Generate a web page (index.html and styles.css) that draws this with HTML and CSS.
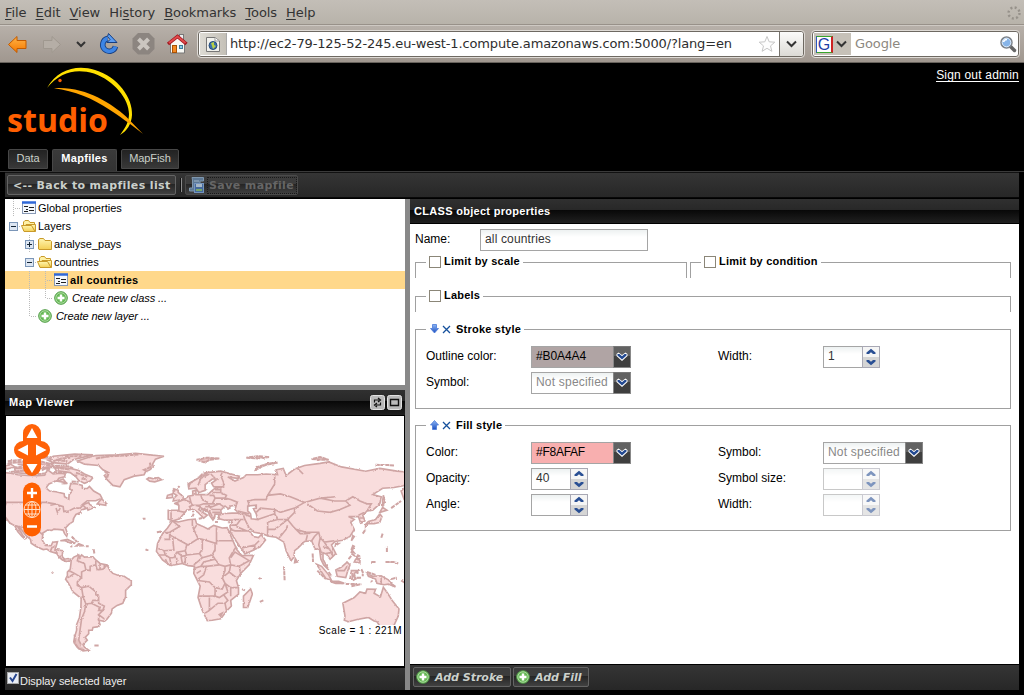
FILE: index.html
```
<!DOCTYPE html>
<html lang="en">
<head>
<meta charset="utf-8">
<title>Studio</title>
<link rel="stylesheet" href="styles.css">
</head>
<body>
<svg class="defs" width="0" height="0" aria-hidden="true">
  <defs>
    <linearGradient id="gBlue" x2="0" y2="1"><stop offset="0" stop-color="#8db6f5"/><stop offset="1" stop-color="#1c4fc0"/></linearGradient>
    <linearGradient id="gFold" x2="0" y2="1"><stop offset="0" stop-color="#fff6b0"/><stop offset="1" stop-color="#f3cf55"/></linearGradient>
    <linearGradient id="gOrange" x2="0" y2="1"><stop offset="0" stop-color="#ffb347"/><stop offset="1" stop-color="#f57900"/></linearGradient>
    <radialGradient id="gAdd"><stop offset="0" stop-color="#7ac968"/><stop offset=".7" stop-color="#62b552"/><stop offset="1" stop-color="#8ccf7c"/></radialGradient>
  </defs>
  <symbol id="vert" viewBox="0 0 16 18"><path d="M8.5 0V18" class="dots"/></symbol>
  <symbol id="tee" viewBox="0 0 16 18"><path d="M8.5 0V18M10 9.500H16" class="dots"/></symbol>
  <symbol id="elbow" viewBox="0 0 16 18"><path d="M8.500 0V10M10 9.500H16" class="dots"/></symbol>
  <symbol id="minus" viewBox="0 0 16 18"><path d="M14 9.500H16" class="dots"/><rect x="4.500" y="5.500" width="8" height="8" fill="#dde6f2" stroke="#7b96b8"/><path d="M6 9.500H11" stroke="#123"/></symbol>
  <symbol id="plus" viewBox="0 0 16 18"><path d="M8.500 0V5M8.500 14V18M14 9.500H16" class="dots"/><rect x="4.500" y="5.500" width="8" height="8" fill="#dde6f2" stroke="#7b96b8"/><path d="M6 9.500H11M8.500 7V12" stroke="#123"/></symbol>
  <symbol id="form" viewBox="0 0 16 18"><rect x="1.500" y="3.500" width="13" height="11" fill="#f4f8fd" stroke="#8899b5"/><path d="M1 3.500H15" stroke="#2f68d8" stroke-width="2.500"/><path d="M3 7.500H7M8 8.500H13M5 10.500H7M8 11.500H13M3 12.500H7" stroke="#222" fill="none"/></symbol>
  <symbol id="folder" viewBox="0 0 16 18"><path d="M1.500 14V4.500L3 3.500H6.500L8 5.500H13.500L14.500 6.500V14.500H2Z" fill="url(#gFold)" stroke="#c99a2a"/></symbol>
  <symbol id="open" viewBox="0 0 16 18"><path d="M2.500 14V5L4 3.500H7.500L9 5.500H13.500V8" fill="#fff2a6" stroke="#c99a2a"/><path d="M5 7.500H14.500V14.500H5Z" fill="url(#gFold)" stroke="#c99a2a"/><path d="M.500 8.500H10.500L14 14.500H3Z" fill="url(#gFold)" stroke="#c99a2a"/></symbol>
  <symbol id="add" viewBox="0 0 16 18"><circle cx="8" cy="9" r="6.300" fill="url(#gAdd)" stroke="#4d9a43"/><circle cx="8" cy="9" r="5.200" fill="none" stroke="#b5e0aa" stroke-width=".8"/><path d="M8 5.500V12.500M4.500 9H11.500" stroke="#fff" stroke-width="2.400"/></symbol>
  <symbol id="chev" viewBox="0 0 15 20"><path d="M2 7L4 5.500L7.500 8L11 5.500L13 7V9L7.500 14L2 9Z" fill="#fff"/><path d="M3 7H5L7.500 9.300L10 7H12V8.500L7.500 12.500L3 8.500Z" fill="#234a92"/></symbol>
  <symbol id="spin" viewBox="0 0 15 20"><path d="M3 7V5.500L7.500 1.800L12 5.500V7H9.500L7.500 5.200L5.500 7Z" fill="#294f94"/><path d="M3 13V14.500L7.500 18.200L12 14.500V13H9.500L7.500 14.800L5.500 13Z" fill="#294f94"/></symbol>
  <symbol id="cross" viewBox="0 0 9 9"><path d="M1 1L8 8M8 1L1 8" stroke="#15509c" stroke-width="1.300"/></symbol>
</svg>

<header class="chrome">
  <nav class="menubar">
    <span><u>F</u>ile</span><span><u>E</u>dit</span><span><u>V</u>iew</span><span>Hi<u>s</u>tory</span><span><u>B</u>ookmarks</span><span><u>T</u>ools</span><span><u>H</u>elp</span>
    <svg class="throbber" width="14" height="14"><circle cx="7" cy="7" r="5.500" fill="none" stroke="#96918a" stroke-width="2.400" stroke-dasharray="2 2.320"/></svg>
  </nav>
  <div class="navbar">
    <svg class="navicons" width="190" height="36">
      <path d="M8.500 18.500L17 10.500V14.500H26V22.500H17V26.500Z" fill="url(#gOrange)" stroke="#c25a00"/>
      <path d="M60.500 18.500L52 10.500V14.500H43.500V22.500H52V26.500Z" fill="#b5aea6" stroke="#9f988f"/>
      <path d="M77 16L81 20L85 16" fill="none" stroke="#333" stroke-width="2"/>
      <path d="M115.500 20.500A6.500 6.500 0 1 1 107.500 12.500" fill="none" stroke="#153e82" stroke-width="5.500"/><path d="M115.500 20.500A6.500 6.500 0 1 1 107.500 12.500" fill="none" stroke="#3d85e5" stroke-width="3.700"/><path d="M108.500 7.500L117 16.500H107L110 13.500L107.500 10.500Z" fill="#5a9bf0" stroke="#153e82"/>
      <path d="M138 7H149L154.500 12.500V23L149 28.500H138L132.500 23V12.500Z" fill="#8c8580"/><path d="M138.500 13L148.500 23M148.500 13L138.500 23" stroke="#cbc6c0" stroke-width="4"/>
      <rect x="179.500" y="8.500" width="4" height="6" fill="#eee" stroke="#777"/><path d="M170.500 17V27H184.500V17L177.500 11Z" fill="#f8f8f4" stroke="#777"/><path d="M168 18L177.500 10.500L186.500 18" fill="none" stroke="#a31720" stroke-width="3.500"/><path d="M169 17L177.500 10.500L185.500 17" fill="none" stroke="#e04a4a" stroke-width="2"/><rect x="172.500" y="19.500" width="4" height="7" fill="#f58a22" stroke="#a85206"/><rect x="179.500" y="19.500" width="3" height="3" fill="#8fd0e8" stroke="#3d7d9c"/>
    </svg>
    <div class="urlbox">
      <span class="favicon"><svg width="16" height="18"><path d="M1.500 2.500H10L14.500 6V16.500H1.500Z" fill="#f1f1ec" stroke="#777"/><path d="M10 2.500V6H14" fill="#fff" stroke="#999"/><circle cx="8" cy="10.500" r="4" fill="#3b70ad" stroke="#254a78"/><path d="M6 8L9 7L9 10L11 11L8 14L7 11Z" fill="#b7cf45"/></svg></span>
      <span class="url">http://ec2-79-125-52-245.eu-west-1.compute.amazonaws.com:5000/?lang=en</span>
      <svg class="star" width="18" height="18"><path d="M9 1.500L11.200 6.800L16.800 7.200L12.500 10.900L13.900 16.300L9 13.300L4.100 16.300L5.500 10.900L1.200 7.200L6.800 6.800Z" fill="#fdfdfd" stroke="#c6c6c6"/></svg>
      <span class="urldrop"><svg width="11" height="8"><path d="M1 1.500L5.500 6L10 1.500" fill="none" stroke="#333" stroke-width="2"/></svg></span>
    </div>
    <div class="search">
      <span class="engine"><b class="g">G</b><svg width="11" height="8"><path d="M1 1.500L5.500 6L10 1.500" fill="none" stroke="#333" stroke-width="2"/></svg></span>
      <span class="hint">Google</span>
      <svg class="lens" width="18" height="18"><path d="M11 11L15.500 15.500" stroke="#666" stroke-width="3.500" stroke-linecap="round"/><circle cx="7.500" cy="7.500" r="5.500" fill="#86b4e8" stroke="#7d8288" stroke-width="1.500"/><circle cx="7.500" cy="7.500" r="4.300" fill="none" stroke="#dbe9f8"/><path d="M4.500 7Q5 4.500 8 4.500" stroke="#fff" stroke-width="1.500" fill="none"/></svg>
    </div>
  </div>
</header>

<div class="banner">
  <svg class="logo" width="150" height="80">
    <text x="7" y="68.500" class="logotext" textLength="101" lengthAdjust="spacingAndGlyphs">studio</text>
    <path d="M47 25C58 6 77 1.500 95 7C118 14 133 35 132 52C131.500 61 127 68 120 72C126 64 129 58 129 51C129 36 114 17.500 94 10.500C76 5 60 9 47 25Z" fill="#ffe000"/>
    <path d="M54 25.200C85 23 111 40 126 53.500L143 71C133 63 125 57 110 47C92 35 75 28 54 25.200Z" fill="#ffa500"/>
    <circle cx="60" cy="17.500" r="1.700" fill="#ff5f00"/>
  </svg>
  <a class="signout">Sign out admin</a>
</div>

<nav class="tabs"><span class="tab">Data</span><span class="tab active">Mapfiles</span><span class="tab fish">MapFish</span></nav>

<div class="toolbar">
  <span class="btn back">&lt;-- Back to mapfiles list</span>
  <i class="sep"></i>
  <span class="btn save"><svg width="17" height="18"><path d="M4 1.500H15.500V5H12V15H1.500V12H4.500V4Z" fill="#5d7894" stroke="#7f97ae"/><path d="M6 5H11M6 8H10" stroke="#9fb4c8"/><rect x="6.500" y="7.500" width="9" height="9" fill="#44699c" stroke="#7494bd"/><rect x="8" y="8" width="6" height="3" fill="#a8b7c6"/><rect x="8" y="13" width="6" height="2" fill="#7aa868"/></svg><em>Save mapfile</em></span>
</div>

<main class="work">
  <section class="left">
    <div class="tree">
      <div class="row"><svg><use href="#tee"/></svg><svg><use href="#form"/></svg><span>Global properties</span></div>
      <div class="row"><svg><use href="#minus"/></svg><svg><use href="#open"/></svg><span>Layers</span></div>
      <div class="row"><i></i><svg><use href="#plus"/></svg><svg><use href="#folder"/></svg><span>analyse_pays</span></div>
      <div class="row"><i></i><svg><use href="#minus"/></svg><svg><use href="#open"/></svg><span>countries</span></div>
      <div class="row selected"><i></i><svg><use href="#vert"/></svg><svg><use href="#tee"/></svg><svg><use href="#form"/></svg><span>all countries</span></div>
      <div class="row create"><i></i><svg><use href="#vert"/></svg><svg><use href="#elbow"/></svg><svg><use href="#add"/></svg><span>Create new class ...</span></div>
      <div class="row create"><i></i><svg><use href="#elbow"/></svg><svg><use href="#add"/></svg><span>Create new layer ...</span></div>
    </div>
    <div class="maphead"><span>Map Viewer</span>
      <svg width="15" height="15"><rect x=".500" y=".500" width="14" height="14" rx="2" fill="#b9b9b9" stroke="#e2e2e2"/><path d="M4.500 7.500V5H9M8 3L10.500 5L8 7M10.500 7.500V10H6M7 8L4.500 10L7 12" fill="none" stroke="#111" stroke-width="1.200"/></svg>
      <svg width="15" height="15"><rect x=".500" y=".500" width="14" height="14" rx="2" fill="#b9b9b9" stroke="#e2e2e2"/><path d="M3.500 4.500H11.500V10.500H3.500Z" fill="#bbb" stroke="#111" stroke-width="1.400"/></svg>
    </div>
    <div class="map">
      <svg class="world" width="398" height="250" viewBox="0 0 398 250">
        <defs><filter id="rough" x="0" y="0" width="1" height="1"><feTurbulence type="fractalNoise" baseFrequency=".35" numOctaves="2" seed="4"/><feDisplacementMap in="SourceGraphic" scale="2.200" xChannelSelector="R" yChannelSelector="G"/></filter></defs>
        <g filter="url(#rough)"><rect width="398" height="250" fill="#fff"/>
        <g transform="translate(175 156) scale(1.420 -1.420)">
          <!-- Coastlines in longitude / latitude -->
          <g class="land">
            <path d="M-135 69L-128 70L-124 70L-120 69.500L-115 68.500L-108 68L-101 67.800L-96 68.200L-94 72L-90 69L-85 69.500L-81.500 69L-82 67L-86 66L-87 64.500L-93 62L-94.500 60L-94.700 58.800L-92.500 57L-88 56.500L-82.300 55.200L-82 53L-79 51.300L-78.800 54.500L-76.600 57L-78.500 59L-77.500 62.400L-73 62L-69.600 61L-69.400 59L-66 58.800L-64.500 60.300L-61.500 57L-57 54.500L-55.700 52L-60 50.200L-66 50.200L-70 47L-65 49L-64.300 47.500L-61 45.500L-65.500 43.500L-66 45L-70 43.700L-70.500 42L-74 40.500L-75.500 38L-76 35.500L-79 33.500L-81.300 31L-80 27L-80.500 25.200L-82 27L-83 29.500L-85 29.800L-89.500 30.200L-91 29.300L-94 29.600L-97.300 27.500L-97.700 22.500L-95.500 18.700L-91.500 18.500L-90.300 21L-87 21.400L-88 18L-88.700 15.800L-83.300 15L-83.700 11L-82 9L-79.500 9.500L-77.300 8.500L-79.500 7.500L-81 7.500L-83.500 8.500L-85.800 10.500L-87.500 13L-92 14.500L-94.500 16.200L-97 15.800L-102 18L-105.500 20.300L-106 23L-109.500 26L-112.800 30.500L-114.800 31.700L-113 28.500L-109.600 23L-112 25L-115 28.500L-117 32.500L-120.500 34.500L-124 39L-124 46L-123 49L-130 55Z"/>
            <path d="M-77.300 8.500L-75.500 10.500L-72 12L-71.500 10L-70 12L-68 10.500L-62 10.700L-60 8.500L-57 6L-52 5L-50 1L-48 -1L-44 -2.500L-40 -3L-37 -5L-35 -6L-35 -9L-39 -13L-39 -17.500L-41 -22L-45 -23.500L-48.500 -26L-49 -29L-52 -33L-54 -34.800L-58 -34L-57 -37L-58 -38.500L-62 -39L-62.500 -41L-65 -41L-65 -43.500L-67.500 -46L-66 -48L-69 -51L-68 -53L-65 -55L-69 -55.500L-73 -53L-75.500 -49L-75 -46L-73.500 -41L-73.500 -37L-71.500 -32L-70.500 -25L-70.300 -18.500L-76 -14L-79.500 -7.500L-81.300 -5L-80 -2.500L-80 0L-78 2L-77.500 6Z"/>
            <path d="M-73 78.200L-66 80.500L-60 82L-45 82.500L-32 83.600L-22 82.500L-12 81.500L-18 79.500L-20 76L-19.500 74L-22 72L-25 70.500L-26 68.500L-33 67.500L-40 65L-43 60L-48 61L-52 65L-54 68L-51 70L-55 72L-58 75L-68 76Z"/>
            <path d="M-24 65.500L-22 64L-18.500 63.500L-13.700 65L-16 66.400L-20 65.800L-22.500 66.400Z"/>
            <path d="M-80 73.500L-72 71.500L-68 69L-62 66.500L-64 64L-68 62.500L-72 64.500L-74 67L-78 70L-88 71.500L-89 73.500Z"/>
            <path d="M-90 77L-80 76L-76 79L-62 82.500L-75 83L-90 81.500L-94 79Z"/>
            <path d="M-117 70L-105 69L-102 70L-106 73L-117 73Z"/><path d="M-125 72L-117 74L-120 76L-125 74Z"/><path d="M-100 73L-92 74L-90 76.500L-100 76L-108 76L-115 76L-105 74Z"/><path d="M-87 64L-81 63L-83 65.500Z"/>
            <path d="M-59 48L-53 47L-53 49L-56 51.500Z"/><path d="M-85 22L-80 23L-74.500 20.200L-78 20.500L-82 22.200Z"/><path d="M-74 18.300L-68.500 18.500L-72 20Z"/>
            <path d="M-6 36L-2 35.200L5 36.800L10 37.300L11 34L15 32.300L19 30.300L23 32.800L29 31L32.500 31.200L34 28L37 21L39.500 15.500L43 11.500L51 11.800L48 5L42 -1L39 -6L40.500 -11L40.500 -15.500L35 -20L35.500 -24L32.500 -27L28 -33L22 -34L18.500 -34.300L15 -27L12 -18L13.500 -10L9 -1L9.500 4L5 4.500L1 6L-7.500 4.400L-13 8.500L-17.300 14.500L-16.500 20L-13 27L-9.500 31Z"/>
            <path d="M44 -25L47 -25L50.300 -15.500L49 -12L44 -17Z"/>
            <path d="M34 28L35 29.500L34.500 32L36 36.500L31 36.500L27 37.500L26.500 40L31 41.200L36 41.500L41 41.500L38 44L39 47L35 46.500L33.500 44.500L31 46.500L28 43.500L28.500 41L24 40.800L23.500 38L22.500 36.500L20 40L19.500 42L13.500 45.500L12.500 44L16 41.500L18.500 40L16 38L12 42L8.500 44.300L4 43.500L-1 37.500L-5.500 36L-9 37.200L-9 43.500L-1.500 43.500L-1.500 47L-4.500 48.300L2 51L5 53.300L8.500 54L8.200 57L10.500 57.500L10.500 54.500L19 54.500L21.500 57L24 59L30 60L23 60L21.500 62.500L25.500 65.500L22 65.500L17 61.500L17 57.500L12.500 56L10.500 59L5.500 58.500L5 62L12 66L19 70L28 71L41 67.500L40 66L33 66.800L38 64L44 66.500L46 68.500L54 68.500L60 69L68 68.500L67 72L72 73L74 68L80 72.500L87 75L98 76.500L104 77.500L113 74L130 71L140 73L152 71L165 69.800L165 60L158 60L163 58L157 51.500L155 57L160 61.500L150 59.500L142 59L135 54.500L141 53L140 48L135 43.500L131 43L128 40L129.500 36L126.500 34.500L125 39L121.500 39L118 39L122 37L119.500 35L122 30L119 25L114 22.300L108.500 21.500L106 19L109 13L105 9L102.500 12.500L100 13.500L100 9L104 1.500L100.500 5L98.500 9L97.500 16.500L94.500 16L92 22L87 21.500L82.500 17L80 15L79.500 10.500L77.500 8L74 15L72.500 21L67 24.500L62 25.200L57 27L51.500 28L49 30.500L48 29L51 25L54.500 24.200L56.500 26.200L59.500 22.500L55.500 17.500L45 12.700L42.500 16.500L39 21.500L35 28Z"/>
            <path d="M47 46.500L53 47L53 45L51 44.500L53 41L54 37L49.500 37.500L49 41L47 43Z" class="water"/>
            <path d="M-5.500 50L1.500 51L1.500 53L-2 56L-2 57.500L-5 58.500L-5.500 55.500L-3 54L-5 52Z"/><path d="M-10 52L-6 52.500L-6 55L-9.500 54Z"/>
            <path d="M130 32L131.500 34L136 34L140 35L141.500 39L140 41L137 37L132 35.500L130 33.500ZM140 42L145 43.500L142 45.500ZM142 46L143.500 50L142.500 54L142 50Z"/>
            <path d="M80 6.500L82 7L80.500 9.500Z"/><path d="M120 22L122 25L121 25.500Z"/><path d="M108.700 18.500L111 20L109 20Z"/>
            <path d="M95.500 5.500L99 4L104 -2L106 -6L102 -4.500L98 1.500Z"/><path d="M105 -6.500L111 -6.500L115 -8L109 -8Z"/><path d="M109 1.500L113 3.500L117 7L119 5L117.500 1L116 -4L110 -3Z"/><path d="M119 -5L120.500 -5L121 -2L123 -5L122 -1L125 1L120 1Z"/><path d="M120 14L122 18L121 18.500L120 16L122 13.500ZM122 7L126 6.500L126 9.500L123 9Z"/><path d="M131 -1L135 -3L141 -2.700L146 -5.500L148 -8L151 -10.500L146 -8.500L143 -9L138 -8L137 -5L132 -3Z"/>
            <path d="M114 -22L122 -18L126 -14L130 -15L131 -12L137 -12.200L136 -15L140.500 -17.500L142.500 -10.800L145.500 -15L149 -20.500L153.500 -26L153 -31L150 -37.500L146 -39L140 -38L138 -35L136 -34.500L132 -32L124 -33.500L118 -35L115 -34L115.500 -31Z"/>
          </g>
          <g class="isles">
            <path d="M11 79L17 77L20 79L27 80L18 80.500L14 79.500ZM52 71L54 73L60 75.500L68 77L61 76.300L54 74ZM46 80.500L54 80L62 81L54 81.500ZM92 79.500L100 79L104 79L98 81ZM137 75.500L146 75.300L150 75M179 71L178 72"/>
            <path d="M-122 76.500L-110 78L-105 77L-99 78L-92 76M-110 80L-94 81L-91 79M-122 78L-112 79M-95 75L-80 74.700L-76 73M-98 71.500L-96 73L-92 72.500M-76 68L-73 68M-80 62.500L-84 62.200M-108 70L-99 69L-95 69.500M-120 70.500L-110 71.500L-103 71M-118 73.500L-108 74.500M-90 70.500L-84 70L-80 70M-90 78L-84 80L-78 80.500M-88 79L-80 78M-82 81.500L-70 81.500M-92 74L-84 73L-78 72M-74 70L-70 68.500L-66 67M-70 66L-66 65M-77 63.800L-72 63.500M-60 80L-50 81.500L-40 82L-30 82.800M-22 77L-21 74L-26 72L-24 71M-52 66.500L-51 69.500L-54 71"/>
            <path d="M-77 25L-75 23L-73 21M-67 18.200H-65M-61.500 16L-61 13M-78 18.200L-76.500 18M-91 -1L-90 0M-25 37.500H-27M-17 28L-14 28.500M-25 16L-23 15M-61 -51.800L-58 -51.800M-75 -44L-74.500 -47L-75 -50L-73.500 -52L-72 -54L-68 -55"/>
            <path d="M8 39L9 41M8.500 42V43M12.500 37.500L15 38M24 35.200H26M33 35H34.500M27 37L26 39M22 38L24 38.500M14 44.500L18 42.500M18 57.500L18.500 58M5.500 60L6 62L8 63.500M13 67L15 69L20 70.500M-4 57L-6 57.500M-2 59.500L-1 60.500M72.500 4L73 -6M92.700 13L93 7M43 -12L45 -13M55 -5L56 -4M55.500 -21L58 -20"/>
            <path d="M96 1L99 -2L102 -5M106 -7L114 -8M116 -8.500L124 -8.500M120 -10L127 -8.500M127 2L128 0L128 -3M134 -6L134.500 -7M148 -5L152 -4M155 -6L160 -9M118 9L120 11.500M124 12L126 11M124 10L125 12M123 0L125 -1M120 13L123 11L125 8M104 0L106 -3M145 14V18M142 27L141 24M148 45L155 50M128 27L130 30M134 7H137M144 7L150 7L153 6M121 -6L124 -4L127 -4M131 0L137 -2M126 34.500L128 35M148 -9L151 -10"/>
          </g>
          <!-- National borders -->
          <path class="borders" d="M-123 49L-95 49L-89 48L-83 46L-82.500 42.500L-79 43L-75 45L-71 45L-69 47L-67 45M-92 47L-88 48L-85 46M-88 45L-87 42L-85 45M-82 43L-79 42M-117 32.500L-111 31.300L-106 31.500L-103 29L-100 28.500L-97 26M-92 14.500L-91 17L-89 18M-89 15.500L-87 13M-85.500 11L-83.500 11M-82.700 9.500V8.500
          M-72 12L-73 8L-68 6L-67 1.500L-70 0L-70 -4L-75 -1L-79 1M-75 -1L-78 -3L-80 -4M-70 -4L-73 -7L-73 -9.500L-70 -11L-69 -17L-70 -18M-67 1.500L-64 1L-64 4L-60 5L-60 8M-60 5L-59 1.500L-55 2L-52 5M-57 6L-57 2M-54 5L-54 2M-70 -11L-65 -10L-60 -14L-60 -16L-58 -17L-58 -20L-62 -20L-63 -22L-67 -22.500L-69 -17M-58 -20L-58 -22L-54 -24L-55 -27L-58 -27L-57 -25L-63 -22M-54 -26L-58 -30L-54 -33M-58 -30L-58 -34M-67 -22.500L-68 -28L-70 -33L-71 -40L-72 -48L-70 -52
          M-6 36L-1 32L-8 28L-13 27.500M-8 28L-8 26L5 19L12 23.500L9 30L11 33M8 37L8 33L9 30M-12 23H-8V26M25 31.500V20L15 23L12 23.500M25 22H37M25 20H24V16L22 12L24 9L27 5L31 4L35 5L34 10L37 15L39 18M-6 25L-5 15.500L-12 15L-16 16.500M-12 15L-11 12L-16 12M-11 12L-8 10L-5 10L-3 14L3 15L4 19M3 15L4 12L1 11L-3 14M4 12L13 13L15 16L15 23M13 13L15 10L9 5M15 10L22 12M24 9L16 7L14 4L9 2.500M14 4L18 4L27 5M18 4L16 -2L12 -5M11 -1L14 1M-8 10L-7 5M-11 9L-9 5M-3 10V5M0 11L1 6M3 11V6M12 -6L20 -7L24 -11L24 -17L12 -17M24 -11L29 -12L31 -8L29 -4L31 1L31 4M29 -4L34 0L39 -4M31 -8L35 -11L40 -11M35 -11L35 -17M34 0L35 5L41 4L42 -1M35 10L38 14L43 11L48 8L41 4M31 -8L33 -14L30 -16L27 -18L24 -17M30 -16L33 -20L31 -22L26 -22L20 -27L20 -18M20 -27L17 -29M31 -22L32 -27M27 -30L29 -29L28 -31Z
          M-2 43L3 42M-7 42L-7 37M2 51L7 49L8 47L6 46L7 44M6 53L7 49M8 47L13 47L16 48L22 48L24 52L23 54L20 54M14 54L15 51L19 49M9 55H10M10 47L14 46M17 46L22 46L27 48L30 46M22 48L28 48M20 46L22 44L28 44M22 42L28 42M20 43L22 39M16 45L19 43M24 52L31 52L32 54L28 56L22 56M28 56L28 59M24 58H28M31 52L35 51L40 49L38 47M30 60L30 63L28 68L29 70M24 66L21 69M20 69L14 66L12 61M40 43L48 41M41 41L44 41L49 39M44 40L45 37L37 37M45 37L48 31M42 37L39 33L36 33M39 32L46 29L48 29M46 29L38 29L35 30M43 17L52 19L55 22M52 19L52 16M48 46L47 50L52 51L60 51L61 54L70 55L77 53L87 49L80 45L70 42L66 44L56 45L53 42M66 44L66 41L54 37M66 41L68 37L61 35L61 30L61 25M68 37L75 37L70 33L66 30L61 30M75 37L80 42L80 45M75 37L79 32L81 30L88 28L97 28L98 24L101 21L108 22M75 33L74 30L70 25L69 24M81 30L84 27L89 27L92 28M89 26L88 22M92 22L94 25L97 28M98 24L97 19L99 13M101 21L103 18L106 14L107 11M100 18L105 16M102 13L107 14M87 49L98 52L108 50L116 50L119 47L112 44L105 42L96 43L89 48M116 50L121 53L126 50L131 48L134 48L131 43M125 40L129 42M126 38H129M66 68L66 62L61 54M82 73L86 69M110 1L115 1L117 4M141 -3V-9M109 53L98 52"/>
        </g></g>
      </svg>
      <svg class="mapctl" width="38" height="116">
        <path d="M10 18V10A9 9 0 0 1 28 10V18A9 9 0 1 1 28 36V44A9 9 0 0 1 10 44V36A9 9 0 1 1 10 18Z" fill="#ff6208"/>
        <path d="M19 5L24.500 15H13.500ZM19 50L24.500 41H13.500ZM4.500 27L15 21.500V32.500ZM33.500 27L23 21.500V32.500Z" fill="#fff"/>
        <rect x="10" y="59.500" width="18" height="54" rx="9" fill="#ff5f00"/><path d="M14 70H24M19 65V75M14 103.500H24" stroke="#fff" stroke-width="2.400"/><g fill="none" stroke="#ffe1c9"><circle cx="19" cy="86.500" r="8"/><ellipse cx="19" cy="86.500" rx="4" ry="8"/><path d="M19 78.500V94.500M11 86.500H27M12.500 82H25.500M12.500 91H25.500"/></g>
      </svg>
      <span class="scale">Scale = 1 : 221M</span>
    </div>
    <div class="mapfoot"><span class="cb"><svg width="10" height="10"><path d="M2 4.500L4.500 8L8.500 1" fill="none" stroke="#28478f" stroke-width="2"/></svg></span><span>Display selected layer</span></div>
  </section>
  <div class="split"></div>
  <section class="right">
    <h1 class="phead">CLASS object properties</h1>
    <div class="form">
      <div class="namerow"><label>Name:</label><span class="field name">all countries</span></div>
      <div class="pair">
        <fieldset class="closed"><legend><i class="check"></i><b>Limit by scale</b></legend></fieldset>
        <fieldset class="closed"><legend><i class="check"></i><b>Limit by condition</b></legend></fieldset>
      </div>
      <fieldset class="closed labels"><legend><i class="check"></i><b>Labels</b></legend></fieldset>
      <fieldset class="stroke"><legend class="tools"><svg width="9" height="10"><path d="M2.500 .500H6.500V4.500H8.500L4.500 9L.500 4.500H2.500Z" fill="url(#gBlue)" stroke="#4a7ad8" stroke-width=".8"/></svg><svg width="9" height="9"><use href="#cross"/></svg>Stroke style</legend>
        <div class="grid">
          <label>Outline color:</label><div class="combo"><span class="field outline">#B0A4A4</span><svg class="trig"><use href="#chev"/></svg></div>
          <label>Width:</label><div class="spinner"><span class="field">1</span><svg class="spin"><use href="#spin"/></svg></div>
          <label>Symbol:</label><div class="combo"><span class="field empty">Not specified</span><svg class="trig"><use href="#chev"/></svg></div>
        </div>
      </fieldset>
      <fieldset class="fill"><legend class="tools"><svg width="9" height="10"><path d="M2.500 9.500H6.500V5H8.500L4.500 .500L.500 5H2.500Z" fill="url(#gBlue)" stroke="#4a7ad8" stroke-width=".8"/></svg><svg width="9" height="9"><use href="#cross"/></svg>Fill style</legend>
        <div class="grid">
          <label>Color:</label><div class="combo"><span class="field pink">#F8AFAF</span><svg class="trig"><use href="#chev"/></svg></div>
          <label>Symbol:</label><div class="combo"><span class="field empty">Not specified</span><svg class="trig"><use href="#chev"/></svg></div>
          <label>Opacity:</label><div class="spinner"><span class="field">40</span><svg class="spin"><use href="#spin"/></svg></div>
          <label>Symbol size:</label><div class="spinner off"><span class="field"></span><svg class="spin"><use href="#spin"/></svg></div>
          <label>Angle:</label><div class="spinner"><span class="field"></span><svg class="spin"><use href="#spin"/></svg></div>
          <label>Width:</label><div class="spinner off"><span class="field"></span><svg class="spin"><use href="#spin"/></svg></div>
        </div>
      </fieldset>
    </div>
    <div class="actions">
      <span class="btn addstroke"><svg width="16" height="18"><use href="#add"/></svg>Add Stroke</span>
      <span class="btn addfill"><svg width="16" height="18"><use href="#add"/></svg>Add Fill</span>
    </div>
  </section>
</main>
</body>
</html>
```
FILE: styles.css
```
* { box-sizing: border-box; }
body { margin: 0; width: 1024px; height: 695px; overflow: hidden; background: #000; font: 11px/18px "Liberation Sans", Arial, sans-serif; color: #000; }
svg { display: block; flex: none; }
.defs { position: absolute; }
.dots { fill: none; stroke: #bbb; stroke-dasharray: 1 1; }

.chrome { height: 63px; font: 13px/16px "DejaVu Sans", sans-serif; color: #333; border-bottom: 1px solid #67625c; }
.menubar { height: 25px; display: flex; align-items: center; gap: 9px; padding: 1px 3px 0 5px; letter-spacing: -.05px; background: linear-gradient(#c3beb7, #b8b3aa); border-bottom: 1px solid #989189; }
.throbber { margin-left: auto; }
.menubar u { text-underline-offset: 2px; }
.navbar { height: 37px; display: flex; background: linear-gradient(#b7b0a9, #a0978f); border-top: 1px solid #cec9c3; }
.urlbox { width: 606px; height: 26px; margin: 5px 0 0 8px; display: flex; align-items: center; border: 1px solid #6e6962; outline: 1px solid #dedad5; background: #fff; border-radius: 3px; }
.favicon { width: 27px; height: 22px; margin-left: 1px; padding: 2px 5px; background: linear-gradient(90deg, #dedcd5, #c4c0b7); border-right: 1px solid #aaa; }
.url { margin-left: 3px; width: 528px; white-space: nowrap; color: #2e2e2e; letter-spacing: -.14px; }
.urldrop { margin-left: 3px; width: 24px; height: 24px; padding: 8px 6px; border-left: 1px solid #77736c; background: linear-gradient(#fbfbfa, #dcdad5); border-radius: 0 3px 3px 0; }
.search { width: 207px; height: 26px; margin: 5px 0 0 8px; display: flex; align-items: center; border: 1px solid #6e6962; outline: 1px solid #dedad5; background: #fff; border-radius: 3px; }
.engine { width: 37px; height: 22px; margin-left: 1px; padding: 2px; display: flex; align-items: center; gap: 3px; background: #c6c1b8; }
.g { width: 17px; height: 17px; background: #fff; border: 1px solid #39a52c; border-left-color: #2a55c0; border-right: 2px solid #c22; color: #1d3fa6; font: 16px/15px "Liberation Sans", sans-serif; text-align: center; }
.hint { flex: 1; margin-left: 4px; color: #8d8880; letter-spacing: -.1px; }
.lens { margin-right: 1px; }

.banner { height: 80px; display: flex; justify-content: space-between; padding-right: 5px; }
.logotext { font: bold 32px "Open Sans", "Noto Sans", sans-serif; fill: #ff5f00; }
.signout { color: #fff; font-size: 12px; line-height: 14px; height: 14px; margin-top: 5px; letter-spacing: .2px; border-bottom: 1px solid #fff; }

.tabs { height: 29px; display: flex; gap: 4px; padding: 6px 0 0 8px; border-bottom: 1px solid #3a3a3a; color: #c9d0c9; }
.tab { width: 40px; height: 20px; border: 1px solid #474747; border-radius: 2px 2px 0 0; background: linear-gradient(#222, #383838); text-align: center; line-height: 17px; letter-spacing: -.1px; }
.tab.active { width: 65px; height: 22px; border-bottom: 0; background: linear-gradient(#3a3a3a, #333); color: #fff; font-weight: bold; letter-spacing: .3px; }
.tab.fish { width: 58px; letter-spacing: -.1px; }
.toolbar { margin: 0 5px; height: 26px; display: flex; align-items: center; padding-left: 2px; background: linear-gradient(#353535, #272727); border-top: 1px solid #111; border-bottom: 1px solid #080808; }
.btn { height: 20px; border: 1px solid #646464; border-radius: 2px; background: linear-gradient(#3c3c3c 0 45%, #252525 46%, #414141); color: #cbd0cb; font: bold 11px/17px "DejaVu Sans", sans-serif; white-space: nowrap; }
.back { width: 169px; padding-left: 5px; letter-spacing: .36px; line-height: 19px; }
.sep { width: 2px; height: 14px; margin: 0 3px 0 4px; background: #8d8d8d; border-left: 1px solid #111; }
.save { width: 113px; display: flex; gap: 2px; padding-left: 2px; border-color: #4a4a4a; color: #666; letter-spacing: .4px; line-height: 19px; }
.save em { height: 17px; margin-top: 1px; line-height: 17px; font-style: normal; outline: 1px dotted #191919; outline-offset: -1px; padding: 0 3px 0 2px; }

.work { margin: 1px 5px 0; height: 491px; display: flex; }
.left { width: 400px; display: flex; flex-direction: column; }
.split { width: 5px; background: #888; }
.right { width: 609px; display: flex; flex-direction: column; }
.tree { height: 186px; background: #fff; }
.row { height: 18px; display: flex; }
.row i, .row svg { width: 16px; height: 18px; flex: none; }
.row span { margin-left: 1px; }
.row.selected { background: #ffd88a; font-weight: bold; }
.row.selected span { letter-spacing: .28px; }
.row.create { font-style: italic; }
.row.create span { margin-left: 3px; letter-spacing: -.08px; }
.maphead, .phead { margin: 0; font: bold 11px/24px "Liberation Sans", sans-serif; letter-spacing: .3px; color: #fff; background: linear-gradient(#303030, #282828 45%, #080808 46%, #202020); }
.maphead { height: 31px; border-top: 5px solid #888; border-bottom: 1px solid #000; padding: 0 3px 0 4px; display: flex; align-items: center; gap: 2px; }
.maphead span { margin: -2px auto 0 0; letter-spacing: .5px; }
.map { position: relative; height: 250px; border: solid #000; border-width: 0 1px; background: #fff; overflow: hidden; }
.world { width: 398px; }
.land path { fill: #f9dddd; }
.land .water { fill: #fff; }
.land path, .borders, .isles path { stroke: #cfa5a4; stroke-width: 1.15; }
.isles path { fill: #e8c4c3; stroke-width: 1.4; stroke-dasharray: 3 .4; }
.borders { fill: none; }
.mapctl { position: absolute; left: 7px; top: 7px; }
.scale { position: absolute; right: 0; bottom: 0; height: 41px; width: 88px; padding: 0 2px; line-height: 12px; font-size: 10px; letter-spacing: .5px; white-space: nowrap; background: #fff; text-align: right; }
.mapfoot { margin-top: 2px; height: 22px; display: flex; align-items: center; padding-left: 2px; gap: 1px; color: #eee; background: linear-gradient(#353535, #272727); letter-spacing: -.03px; }
.cb { width: 12px; height: 12px; background: #e9edf4; border: 1px solid #aaa; margin-top: -2px; }
.mapfoot span:last-child { padding-top: 3px; }

.phead { height: 25px; padding-left: 4px; border-bottom: 1px solid #000; }
.form { height: 440px; padding: 5px 8px 0 5px; background: #fff; font-size: 12px; }
.namerow { display: flex; height: 24px; }
label { line-height: 20px; }
.namerow label { width: 65px; }
.field { display: block; height: 22px; border: 1px solid #a5a5a5; background: linear-gradient(#edf1f1, #fff 7px); padding-left: 4px; line-height: 18px; color: #333; letter-spacing: .15px; }
.name { width: 168px; }
.pair { display: grid; grid-template-columns: 272px 321px; gap: 3px; }
fieldset { margin: 0; min-width: 0; border: 1px solid #a0a0a0; padding: 8px 10px 0; }
.closed { height: 25px; border-bottom: 0; padding: 0 10px; }
.closed b { padding-bottom: 2px; line-height: 16px; }
.labels { margin-top: 9px; }
.stroke { margin-top: 8px; height: 89px; }
.fill { margin-top: 7px; height: 115px; }
legend { display: flex; align-items: center; height: 18px; padding: 0 3px; font: bold 11px/18px "Liberation Sans", sans-serif; letter-spacing: .22px; }
.check { width: 12px; height: 12px; border: 1px solid #8b8678; margin-right: 3px; background: #fff; }
.tools svg:first-child { margin: 0 3px 0 1px; }
.tools svg + svg { margin-right: 5px; }
.grid { display: grid; grid-template-columns: 105px 187px 105px 100px; row-gap: 4px; grid-auto-rows: 22px; }
.stroke label:last-of-type { grid-column: 1; }
.combo, .spinner { display: flex; }
.combo .field { width: 82px; border-right: 0; }
.trig { width: 18px; height: 22px; border: 1px solid #888; border-top-color: #777; background: linear-gradient(#626262 45%, #3f3f3f 46%); }
.field.outline { background: #b0a4a4; color: #000; letter-spacing: -.1px; }
.field.pink { background: #f8afaf; color: #000; letter-spacing: -.25px; }
.combo .empty { color: #888; letter-spacing: .2px; }
.spinner .field { width: 39px; border-right: 0; }
.spin { width: 18px; height: 22px; border: 1px solid #a8a8b4; background: linear-gradient(#f5f5f5 50%, #d5d5d5 50%); }
.off { opacity: .6; }
.actions { height: 26px; display: flex; gap: 2px; padding: 2px 3px; border-top: 1px solid #000; background: linear-gradient(#353535, #272727); }
.actions .btn { display: flex; align-items: center; gap: 4px; padding-left: 1px; font-style: italic; }
.addstroke { width: 98px; }
.addfill { width: 76px; }
```
